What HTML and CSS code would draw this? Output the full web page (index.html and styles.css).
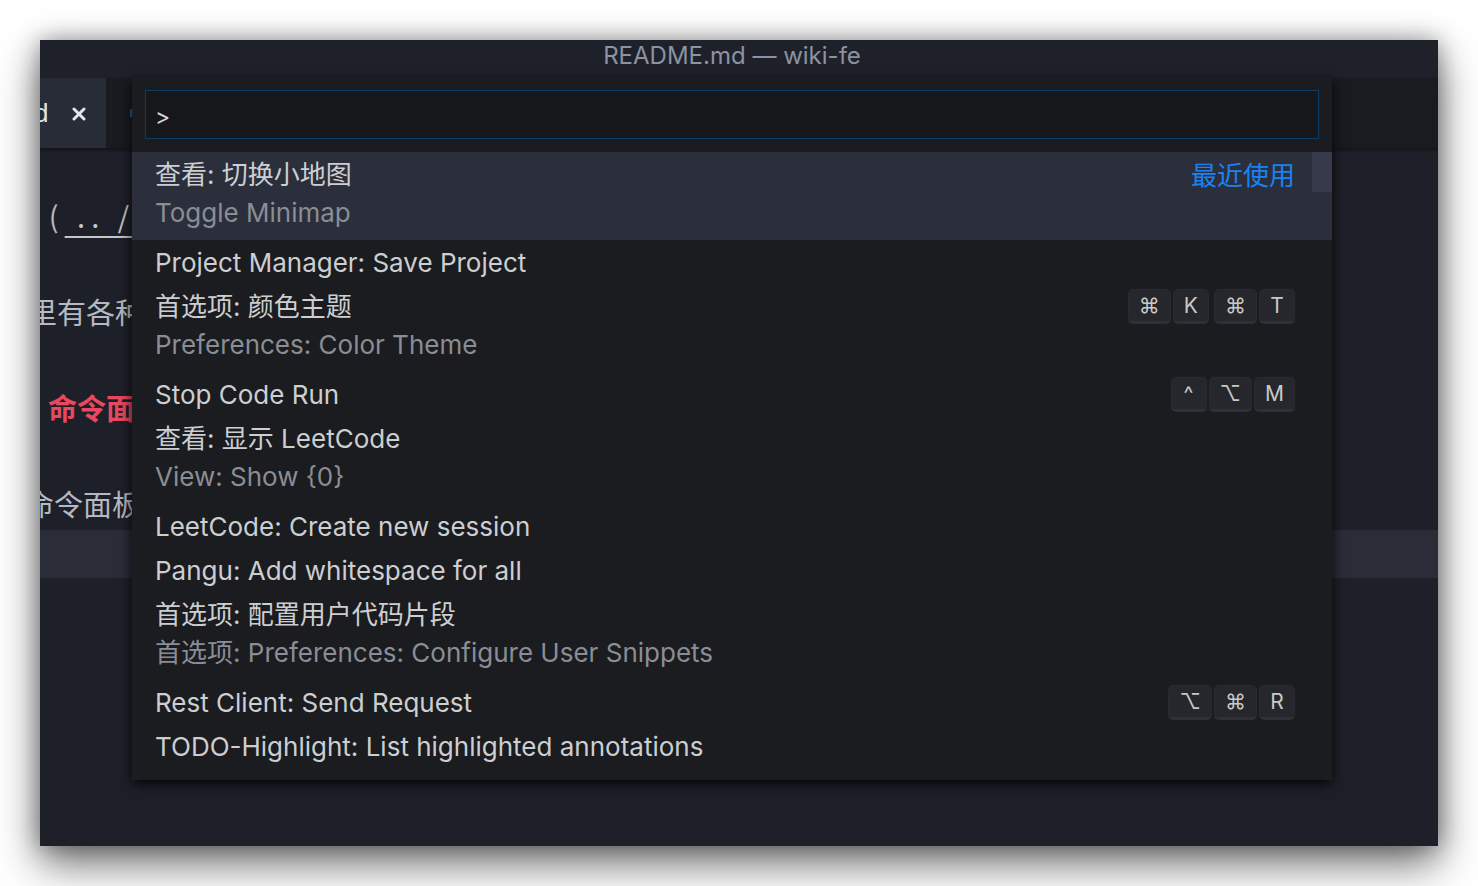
FILE: index.html
```html
<!DOCTYPE html>
<html lang="zh">
<head>
<meta charset="utf-8">
<title>README.md — wiki-fe</title>
<link rel="stylesheet" href="styles.css">
</head>
<body>
<div class="window">
  <div class="titlebar">README.md — wiki-fe</div>
  <div class="tabbar">
    <div class="tab">
      <span class="tab-name">d</span>
      <svg class="tab-close" width="14" height="14" viewBox="0 0 14 14"><path d="M2 2 L12 12 M12 2 L2 12" stroke="#e6e6e6" stroke-width="3" stroke-linecap="round"/></svg>
    </div>
    <div class="tab-mark"></div>
  </div>
  <div class="editor">
    <div class="line l1"><span class="red">]</span><span class="paren">(</span><span class="link">&nbsp;..&nbsp;/&nbsp;</span></div>
    <div class="line"></div>
    <div class="line l2">里有各种</div>
    <div class="line"></div>
    <div class="line l3"><span class="red bold">命令面</span></div>
    <div class="line"></div>
    <div class="line l4">命令面板</div>
    <div class="line current"></div>
  </div>

  <div class="quick-open">
    <div class="input-wrap"><div class="input">&gt;</div></div>
    <div class="list">
      <div class="scrollbar"></div>
      <div class="row two selected">
        <div class="texts">
          <div class="label">查看: 切换小地图</div>
          <div class="detail">Toggle Minimap</div>
        </div>
        <div class="right"><span class="recent">最近使用</span></div>
      </div>
      <div class="row">
        <div class="texts"><div class="label">Project Manager: Save Project</div></div>
      </div>
      <div class="row two">
        <div class="texts">
          <div class="label">首选项: 颜色主题</div>
          <div class="detail">Preferences: Color Theme</div>
        </div>
        <div class="right">
          <span class="chord"><span class="key">⌘</span><span class="key">K</span></span>
          <span class="chord"><span class="key">⌘</span><span class="key">T</span></span>
        </div>
      </div>
      <div class="row">
        <div class="texts"><div class="label">Stop Code Run</div></div>
        <div class="right">
          <span class="chord"><span class="key">^</span><span class="key">⌥</span><span class="key">M</span></span>
        </div>
      </div>
      <div class="row two">
        <div class="texts">
          <div class="label">查看: 显示 LeetCode</div>
          <div class="detail">View: Show {0}</div>
        </div>
      </div>
      <div class="row">
        <div class="texts"><div class="label">LeetCode: Create new session</div></div>
      </div>
      <div class="row">
        <div class="texts"><div class="label">Pangu: Add whitespace for all</div></div>
      </div>
      <div class="row two">
        <div class="texts">
          <div class="label">首选项: 配置用户代码片段</div>
          <div class="detail">首选项: Preferences: Configure User Snippets</div>
        </div>
      </div>
      <div class="row">
        <div class="texts"><div class="label">Rest Client: Send Request</div></div>
        <div class="right">
          <span class="chord"><span class="key">⌥</span><span class="key">⌘</span><span class="key">R</span></span>
        </div>
      </div>
      <div class="row">
        <div class="texts"><div class="label">TODO-Highlight: List highlighted annotations</div></div>
      </div>
    </div>
  </div>
</div>
</body>
</html>
```

FILE: styles.css
```css
* { box-sizing: border-box; }

html, body {
  margin: 0;
  padding: 0;
  background: #ffffff;
}

body {
  font-family: "Inter", "Noto Sans CJK SC", sans-serif;
  width: 1478px;
  height: 886px;
  overflow: hidden;
}

.window {
  position: relative;
  margin: 40px 0 0 40px;
  width: 1398px;
  height: 806px;
  background: #1e2029;
  display: flex;
  flex-direction: column;
  overflow: hidden;
  box-shadow: 0 18px 40px rgba(0, 0, 0, 0.55), 0 0 22px rgba(0, 0, 0, 0.35);
}

.titlebar {
  height: 38px;
  flex: none;
  background: #1f212a;
  color: #8b92a2;
  font-size: 24px;
  line-height: 31px;
  text-align: center;
  padding-right: 14px;
}

.tabbar {
  height: 70px;
  flex: none;
  background: #191b20;
  display: flex;
  align-items: stretch;
  box-shadow: 0 2px 3px rgba(0, 0, 0, 0.45);
  position: relative;
  z-index: 1;
}

.tab {
  width: 66px;
  background: #282c37;
  display: flex;
  align-items: center;
  color: #e4e4e4;
  font-size: 26px;
  margin-right: 2px;
}

.tab-name {
  margin-left: -6px;
  width: 38px;
  font-family: "Liberation Sans", sans-serif;
}

.tab-close {
  display: block;
  margin-top: 2px;
}

.tab-mark {
  width: 2px;
  height: 8px;
  margin: 31px 0 0 22px;
  background: #1f5f9c;
}

.editor {
  flex: 1;
  padding-top: 43px;
  font-family: "Noto Sans CJK SC", sans-serif;
  font-size: 29px;
  color: #b5b9c2;
}

.line {
  height: 48px;
  line-height: 48px;
  white-space: nowrap;
}

.line.current {
  background: #2a2d38;
  margin-top: 3px;
}

.l1 {
  margin-left: -9px;
}
.l1 .paren {
  margin-left: 8px;
  color: #b5b9c2;
}
.l1 .link {
  margin-left: 6px;
  letter-spacing: 6px;
  text-decoration: underline;
  text-decoration-color: #c3c6cc;
  text-underline-offset: 8px;
  color: #c3c6cc;
}

.l2 { margin-left: -12px; }
.l3 { margin-left: 8px; }
.l4 { margin-left: -15px; }

.red { color: #e9485e; }
.bold { font-weight: bold; }

/* quick open overlay */
.quick-open {
  position: absolute;
  left: 92px;
  top: 38px;
  width: 1200px;
  height: 702px;
  background: #1a1c20;
  box-shadow: 0 4px 12px rgba(0, 0, 0, 0.85);
  z-index: 5;
  padding: 12px 0;
}

.input-wrap {
  padding: 0 13px;
}

.input {
  height: 49px;
  background: #16171b;
  border: 1px solid #0b3c66;
  color: #d4d4d4;
  font-size: 23px;
  line-height: 52px;
  padding-left: 9px;
}

.list {
  margin-top: 13px;
  position: relative;
}

.scrollbar {
  position: absolute;
  right: 0;
  top: 0;
  width: 20px;
  height: 40px;
  background: #363a4a;
}

.row {
  display: flex;
  justify-content: space-between;
  padding: 0 37px 0 23px;
}

.row.two {
  padding-bottom: 10px;
}

.row.selected {
  background: #2b2f3b;
}

.label {
  height: 44px;
  line-height: 45px;
  font-size: 26px;
  color: #cdced0;
  white-space: nowrap;
}

.detail {
  height: 34px;
  line-height: 34px;
  font-size: 26px;
  color: #8a8d94;
  white-space: nowrap;
}

.right {
  height: 44px;
  display: flex;
  align-items: center;
  gap: 5px;
}

.recent {
  color: #1a82f5;
  font-size: 26px;
  margin-top: -2px;
}

.chord {
  display: flex;
  gap: 2px;
}

.key {
  height: 35px;
  min-width: 36px;
  padding: 0 10px;
  background: #25272c;
  border: 1px solid #282a2f;
  border-bottom: 3px solid #2d3035;
  border-radius: 5px;
  color: #c9c9c9;
  font-family: "Inter", "DejaVu Sans", sans-serif;
  font-size: 21px;
  line-height: 31px;
  text-align: center;
}
```
